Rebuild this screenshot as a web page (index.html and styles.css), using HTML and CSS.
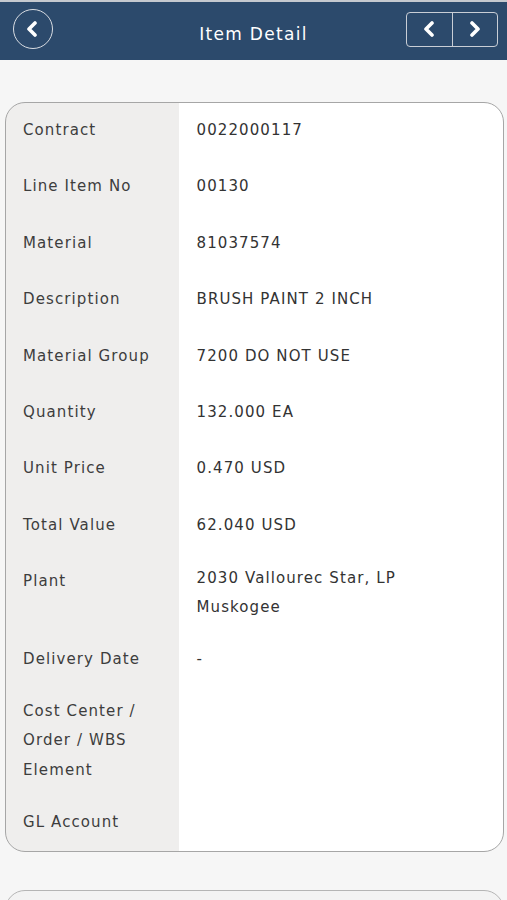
FILE: index.html
```html
<!DOCTYPE html>
<html lang="en">
<head>
<meta charset="utf-8">
<title>Item Detail</title>
<link rel="stylesheet" href="styles.css">
</head>
<body>
<header class="topbar">
  <button class="back" aria-label="Back">
    <svg width="14" height="16" viewBox="0 0 14 16"><path d="M10 2 L4 8 L10 14" fill="none" stroke="#fff" stroke-width="3.6" stroke-linecap="round" stroke-linejoin="round"/></svg>
  </button>
  <h1 class="title">Item Detail</h1>
  <div class="pager">
    <button class="pg" aria-label="Previous">
      <svg width="14" height="16" viewBox="0 0 14 16"><path d="M10 2 L4 8 L10 14" fill="none" stroke="#fff" stroke-width="3.6" stroke-linecap="round" stroke-linejoin="round"/></svg>
    </button>
    <button class="pg" aria-label="Next">
      <svg width="14" height="16" viewBox="0 0 14 16"><path d="M4 2 L10 8 L4 14" fill="none" stroke="#fff" stroke-width="3.6" stroke-linecap="round" stroke-linejoin="round"/></svg>
    </button>
  </div>
</header>
<main class="content">
  <section class="card">
    <div class="row tall"><div class="lbl">Contract</div><div class="val">0022000117</div></div>
    <div class="row tall"><div class="lbl">Line Item No</div><div class="val">00130</div></div>
    <div class="row tall"><div class="lbl">Material</div><div class="val">81037574</div></div>
    <div class="row tall"><div class="lbl">Description</div><div class="val">BRUSH PAINT 2 INCH</div></div>
    <div class="row tall"><div class="lbl">Material Group</div><div class="val">7200 DO NOT USE</div></div>
    <div class="row tall"><div class="lbl">Quantity</div><div class="val">132.000 EA</div></div>
    <div class="row tall"><div class="lbl">Unit Price</div><div class="val">0.470 USD</div></div>
    <div class="row tall"><div class="lbl">Total Value</div><div class="val">62.040 USD</div></div>
    <div class="row"><div class="lbl">Plant</div><div class="val up">2030 Vallourec Star, LP<br>Muskogee</div></div>
    <div class="row"><div class="lbl">Delivery Date</div><div class="val">-</div></div>
    <div class="row"><div class="lbl">Cost Center /<br>Order / WBS<br>Element</div><div class="val"></div></div>
    <div class="row last"><div class="lbl">GL Account</div><div class="val"></div></div>
  </section>
  <section class="card next"></section>
</main>
</body>
</html>
```
FILE: styles.css
```css
* { box-sizing: border-box; }
html, body { margin: 0; padding: 0; }
body {
  background: #f6f6f6;
  font-family: "DejaVu Sans", Verdana, sans-serif;
  width: 507px;
  height: 900px;
  overflow: hidden;
}
.topbar {
  height: 60px;
  background: #2c4a6c;
  border-top: 2px solid #c5c9cf;
  display: grid;
  grid-template-columns: 1fr auto 1fr;
  align-items: center;
  padding: 0 9px 0 13px;
}
.back {
  justify-self: start;
  width: 40px;
  height: 40px;
  border-radius: 50%;
  border: 1.5px solid #d9dde3;
  background: transparent;
  display: flex;
  align-items: center;
  justify-content: center;
  padding: 0 2px 0 0;
  margin-top: -5px;
}
.title {
  margin: 0;
  text-align: center;
  color: #fff;
  font-weight: normal;
  font-size: 17px;
  letter-spacing: 1.3px;
  padding-top: 5px;
  padding-right: 4px;
  white-space: nowrap;
}
.pager {
  justify-self: end;
  display: flex;
  width: 92px;
  height: 35px;
  border: 1.5px solid #c9ced6;
  border-radius: 4px;
  margin-top: -4px;
}
.pg {
  flex: 1;
  background: transparent;
  border: none;
  display: flex;
  align-items: center;
  justify-content: center;
  padding: 0;
}
.pg + .pg { border-left: 1.5px solid #c9ced6; }
.content {
  padding: 42px 3px 0 5px;
  display: flex;
  flex-direction: column;
  gap: 38px;
}
.card {
  border: 1.5px solid #a6a6a6;
  border-radius: 20px;
  overflow: hidden;
  background: linear-gradient(to right, #efeeed 0, #efeeed 172.5px, #fff 172.5px);
}
.row {
  display: grid;
  grid-template-columns: 172.5px 1fr;
  align-items: start;
  color: #3d3d3d;
  font-size: 15px;
  letter-spacing: 1.1px;
  line-height: 29.3px;
}
.row.tall { min-height: 56.4px; }
.row.last { min-height: 55.6px; }
.lbl {
  padding: 13px 4px 10px 17px;
}
.val {
  padding: 13px 8px 10px 18px;
  color: #333;
}
.val.up { padding-top: 10px; padding-bottom: 9px; }
.card.next {
  flex: none;
  height: 80px;
  background: #f3f3f3;
  border-color: #b5b5b5;
}
```
